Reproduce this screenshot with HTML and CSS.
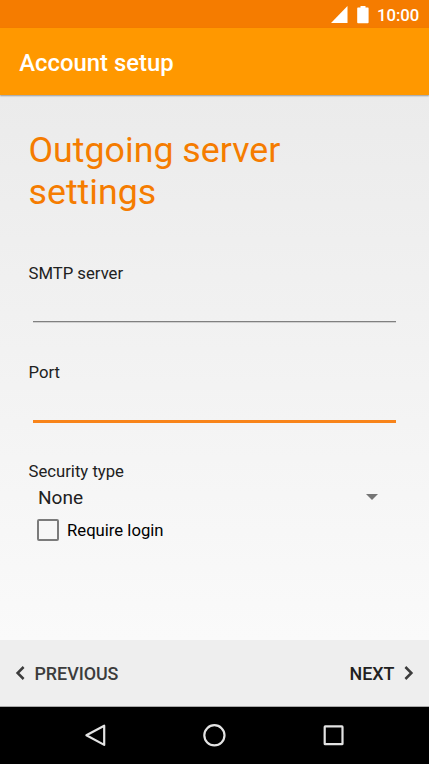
FILE: index.html
```html
<!DOCTYPE html>
<html lang="en">
<head>
<meta charset="utf-8">
<title>Account setup</title>
<link rel="stylesheet" href="styles.css">
</head>
<body>
<div class="screen">
  <div class="status">
    <svg class="signal" width="17" height="17" viewBox="0 0 17 17"><path d="M16.5 0V17H0Z"/></svg>
    <svg class="battery" width="12" height="18" viewBox="0 0 12 18"><path d="M3.5 0H8.5V1.6H11Q11.6 1.6 11.6 2.4V16.3Q11.6 17.2 10.8 17.2H1Q.2 17.2 .2 16.3V2.4Q.2 1.6 1 1.6H3.5Z"/></svg>
    <span class="clock">10:00</span>
  </div>
  <header class="appbar"><span class="title">Account setup</span></header>
  <main class="content">
    <h1>Outgoing server<br>settings</h1>
    <div class="field">
      <label for="server">SMTP server</label>
      <input id="server" class="input" type="text">
    </div>
    <div class="field">
      <label for="port">Port</label>
      <input id="port" class="input active" type="text">
    </div>
    <div class="label">Security type</div>
    <div class="select">
      <span class="value">None</span>
      <svg width="12" height="6" viewBox="0 0 12 6"><path d="M0 0H12L6 6Z"/></svg>
    </div>
    <div class="check"><span class="box"></span><span class="checktext">Require login</span></div>
  </main>
  <footer class="actions">
    <div class="action previous">
      <svg width="10" height="14" viewBox="0 0 10 14"><path d="M8.6 1L2.6 7L8.6 13"/></svg>
      <span class="prevtext">PREVIOUS</span>
    </div>
    <div class="action next">
      <span class="nexttext">NEXT</span>
      <svg width="10" height="14" viewBox="0 0 10 14"><path d="M1.4 1L7.4 7L1.4 13"/></svg>
    </div>
  </footer>
  <nav class="navbar">
    <svg width="24" height="24" viewBox="0 0 24 24"><path d="M21.2 2.7V21.9L3.4 12.3Z"/></svg>
    <svg width="24" height="24" viewBox="0 0 24 24"><circle cx="12.4" cy="12.3" r="10.1"/></svg>
    <svg width="24" height="24" viewBox="0 0 24 24"><rect x="3.7" y="3.4" width="17.8" height="17.8" rx=".5"/></svg>
  </nav>
</div>
</body>
</html>
```

FILE: styles.css
```css
* { box-sizing: border-box; }

body {
  margin: 0;
  font-family: Roboto, sans-serif;
  color: #212121;
}

svg { display: block; flex: none; }

.screen {
  width: 429px;
  height: 764px;
  display: flex;
  flex-direction: column;
  overflow: hidden;
}

.status {
  height: 28.4px;
  flex: none;
  display: flex;
  align-items: flex-start;
  padding: 6px 10px 0 331px;
  background: #f57c00;
  color: #fff;
}

.status svg { fill: #fff; }
.battery { margin-left: 9px; }

.clock {
  margin-left: 8px;
  font-size: 16.7px;
  font-weight: 500;
  line-height: 19px;
}

.appbar {
  height: 67px;
  flex: none;
  display: flex;
  align-items: center;
  padding: 3px 19.3px 0;
  background: #ff9800;
  color: #fff;
  font-size: 23.85px;
  font-weight: 500;
  box-shadow: 0 1px 1.5px rgba(0, 0, 0, .35);
  z-index: 1;
}

.content {
  flex: 1;
  padding: 33.6px 28.5px 0;
  background: linear-gradient(#ebebeb, #fafafa);
}

h1 {
  margin: 0 0 51px;
  font-size: 35.75px;
  font-weight: 400;
  line-height: 42px;
  color: #f57c00;
}

.field {
  height: 99.2px;
  display: flex;
  flex-direction: column;
}

label, .label {
  font-size: 16.7px;
  line-height: 20px;
}

.input {
  height: 38px;
  margin: 0 4.5px;
  padding: 0;
  border: 0;
  border-bottom: 1px solid #808080;
  box-shadow: 0 1px #d0d0d0;
  background: none;
  outline: none;
  font: 19px Roboto, sans-serif;
}

.input.active {
  height: 39.5px;
  border-bottom: 3px solid #f8841a;
  box-shadow: none;
}

.select {
  height: 31px;
  display: flex;
  align-items: center;
  justify-content: space-between;
  padding: 0 23px 0 9.5px;
  font-size: 19.07px;
}

.select svg {
  margin-bottom: 2px;
  fill: #757575;
}

.check {
  height: 34px;
  display: flex;
  align-items: center;
  padding-left: 8.5px;
  font-size: 16.7px;
  color: #000;
}

.box {
  width: 22px;
  height: 22px;
  margin-right: 8px;
  border: 2px solid #7b7b7b;
  border-radius: 2px;
}

.actions {
  height: 67px;
  flex: none;
  display: flex;
  justify-content: space-between;
  align-items: center;
  padding: 0 15px;
  background: #eee;
  border-bottom: 1px solid #aaa;
  font-size: 17.9px;
  font-weight: 500;
}

.action {
  display: flex;
  align-items: center;
  gap: 9.5px;
}

.action svg {
  fill: none;
  stroke: #3c3c3c;
  stroke-width: 2.5;
}

.previous {
  color: #3c3c3c;
  letter-spacing: -.05px;
}

.navbar {
  height: 57px;
  flex: none;
  display: flex;
  align-items: center;
  justify-content: center;
  gap: 95px;
  padding: 0 1px 1px 0;
  background: #000;
}

.navbar svg {
  fill: none;
  stroke: #e3e3e3;
  stroke-width: 2.2;
  stroke-linejoin: round;
}
```
